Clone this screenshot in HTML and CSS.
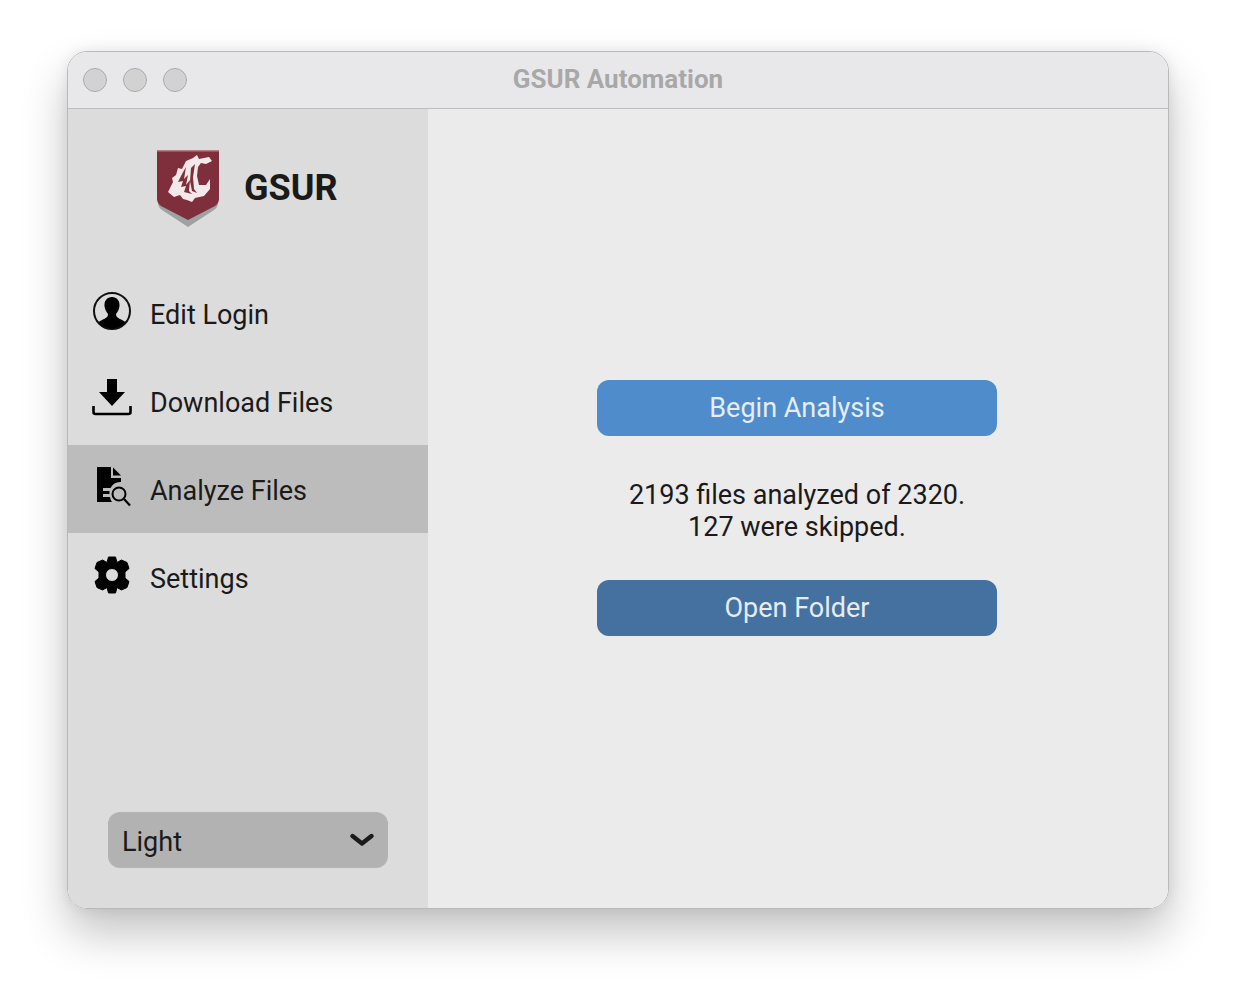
FILE: index.html
```html
<!DOCTYPE html>
<html lang="en">
<head>
<meta charset="utf-8">
<title>GSUR Automation</title>
<link rel="stylesheet" href="styles.css">
</head>
<body>
<div class="window">
  <header class="titlebar">
    <div class="lights"><span class="light"></span><span class="light"></span><span class="light"></span></div>
    <div class="title">GSUR Automation</div>
  </header>
  <div class="body">
    <aside class="sidebar">
      <div class="brand">
        <svg class="logo" width="66" height="80" viewBox="0 0 66 80">
          <path d="M3 17 L3 54 Q3 58 7 61 L33 78 L59 61 Q63 58 63 54 L63 17 Z" fill="#9da3a3"/>
          <path d="M2 1 H64 V50 Q64 54 60 57 L33 71 L6 57 Q2 54 2 50 Z" fill="#7f2f3c"/>
          <path d="M2 1 H64 V2.500 H2 Z" fill="#b27f86"/>
          <path d="M13 43 L18 33 L17 29 L21 26 L23 19 L27 20 L31 12 L38 9 L42 6 L44 10 L54 8 L57 12 L51 15 L46 14 L43 18 L42 27 L44 36 L51 36 L55 30 L55 40 L49 47 L40 49 L37 53 L32 51 L28 50 L25 46 L19 48 Z" fill="#f3e9ea"/>
          <path d="M27 25 L31 18 L29 30 L33 26 L31 36 L35 31 L34 42 L37 45 L29 43 L31 37 L26 38 L28 32 L23 33 Z" fill="#7f2f3c"/>
          <path d="M36 19 L40 15 L38 28 L39 40 L42 44 L37 42 L35 32 Z" fill="#7f2f3c"/>
        </svg>
        <span class="brand-name">GSUR</span>
      </div>
      <nav class="nav">
        <a class="nav-item">
          <svg class="icon" width="40" height="40" viewBox="0 0 40 40">
            <circle cx="20" cy="20" r="18" fill="none" stroke="#111" stroke-width="2"/>
            <path d="M20 6 C25 6 28 10 27.500 15 C27 19 25.500 21 24 23 C24 26 26 27 30 29 L33.500 31 C30 35.500 25 37.500 20 37.500 C15 37.500 10 35.500 6.500 31 L10 29 C14 27 16 26 16 23 C14.500 21 13 19 12.500 15 C12 10 15 6 20 6 Z" fill="#000"/>
          </svg>
          <span>Edit Login</span>
        </a>
        <a class="nav-item">
          <svg class="icon" width="40" height="40" viewBox="0 0 40 40">
            <path d="M15 0 H25 V13 H33 L20 27 L7 13 H15 Z" fill="#000"/>
            <path d="M1.500 27 V33 Q1.500 35 3.500 35 H36.500 Q38.500 35 38.500 33 V27" fill="none" stroke="#000" stroke-width="2.600"/>
          </svg>
          <span>Download Files</span>
        </a>
        <a class="nav-item active">
          <svg class="icon" width="40" height="40" viewBox="0 0 40 40">
            <path d="M5 0 H19 V11 H29 V15 A11 11 0 0 0 18.500 21 H11 V24 H17.500 V27 H11 V30 H18 A11 11 0 0 0 20 35 H5 Z" fill="#000"/>
            <path d="M21 0.500 L29 8.500 H21 Z" fill="#000"/>
            <path d="M8 24 H17 V26 H8 Z" fill="#000" opacity="0"/>
            <circle cx="27" cy="27" r="6.500" fill="none" stroke="#000" stroke-width="2"/>
            <path d="M32 32 L38 38.500" stroke="#000" stroke-width="2.200"/>
          </svg>
          <span>Analyze Files</span>
        </a>
        <a class="nav-item">
          <svg class="icon" width="40" height="40" viewBox="0 0 40 40">
            <path fill-rule="evenodd" d="M16.500 2 H23.500 L25 7.500 L29.500 5 L35 7.500 L37 13.500 L33 17 V23 L37 26.500 L35 32.500 L29.500 35 L25 32.500 L23.500 38 H16.500 L15 32.500 L10.500 35 L5 32.500 L3 26.500 L7 23 V17 L3 13.500 L5 7.500 L10.500 5 L15 7.500 Z M20 13.500 A6.500 6.500 0 1 0 20 26.500 A6.500 6.500 0 1 0 20 13.500 Z" fill="#000" stroke="#000" stroke-width="1" stroke-linejoin="round"/>
          </svg>
          <span>Settings</span>
        </a>
      </nav>
      <div class="theme">
        <span>Light</span>
        <svg width="24" height="14" viewBox="0 0 24 14"><path d="M2.500 3 L12 10.500 L21.500 3" fill="none" stroke="#1a1a1a" stroke-width="4.400" stroke-linecap="round" stroke-linejoin="round"/></svg>
      </div>
    </aside>
    <main class="content">
      <div class="panel">
        <button class="btn btn-primary">Begin Analysis</button>
        <p class="status">2193 files analyzed of 2320.<br>127 were skipped.</p>
        <button class="btn btn-secondary">Open Folder</button>
      </div>
    </main>
  </div>
</div>
</body>
</html>
```
FILE: styles.css
```css
* { box-sizing: border-box; }
html, body { margin: 0; height: 100%; }
body {
  background: #fff;
  padding: 51px 67px 83px;
  font-family: Roboto, "Liberation Sans", sans-serif;
  color: #1a1a1a;
}
.window {
  width: 1102px;
  height: 858px;
  border: 1px solid #b9b9b9;
  border-radius: 20px;
  overflow: hidden;
  display: flex;
  flex-direction: column;
  box-shadow: 0 24px 46px rgba(0,0,0,.24), 0 0 14px rgba(0,0,0,.08);
}
.titlebar {
  height: 57px;
  flex: none;
  display: flex;
  align-items: center;
  background: #e8e8ea;
  border-bottom: 1px solid #bebebe;
  position: relative;
  padding: 0 0 0 15px;
}
.lights { display: flex; gap: 16px; }
.light {
  width: 24px; height: 24px;
  border-radius: 50%;
  background: #d2d2d2;
  border: 1px solid #ababab;
}
.title {
  position: absolute;
  left: 0; right: 0; top: 11px;
  text-align: center;
  font-size: 26px;
  line-height: 32px;
  font-weight: 700;
  color: #a8a8a8;
}
.body { flex: 1; display: flex; min-height: 0; }
.sidebar {
  width: 360px;
  flex: none;
  background: #dcdcdc;
  display: flex;
  flex-direction: column;
}
.brand {
  height: 160px;
  flex: none;
  display: flex;
  align-items: flex-start;
  padding: 40px 0 0 87px;
}
.brand-name {
  margin: 17px 0 0 23px;
  font-size: 36px;
  line-height: 44px;
  font-weight: 700;
  color: #1a1a1a;
}
.nav { display: flex; flex-direction: column; }
.nav-item {
  height: 88px;
  display: flex;
  align-items: center;
  padding-left: 24px;
  gap: 18px;
  font-size: 27px;
  color: #1a1a1a;
}
.nav-item span { position: relative; top: 2px; }
.nav-item .icon { margin-top: -4px; flex: none; }
.nav-item.active { background: #bcbcbc; }
.theme {
  margin: auto 40px 40px;
  height: 56px;
  border-radius: 12px;
  background: #b2b2b2;
  display: flex;
  align-items: center;
  justify-content: space-between;
  padding: 0 14px;
  font-size: 27px;
}
.theme span { position: relative; top: 2px; }
.content {
  flex: 1;
  background: #ebebeb;
  display: flex;
  justify-content: center;
  padding: 271px 0 0 0;
}
.panel {
  width: 400px;
  margin-left: -0px;
  position: relative;
  left: -1px;
}
.btn {
  display: block;
  width: 400px;
  height: 56px;
  border: 0;
  border-radius: 12px;
  font-family: inherit;
  font-size: 27px;
  color: #e6ecf2;
  padding: 0;
}
.btn-primary { background: #4f8ccc; }
.btn-secondary { background: #44719f; }
.status {
  margin: 0;
  padding: 43px 0 37px;
  text-align: center;
  font-size: 27px;
  line-height: 32px;
  color: #1a1a1a;
}
```
